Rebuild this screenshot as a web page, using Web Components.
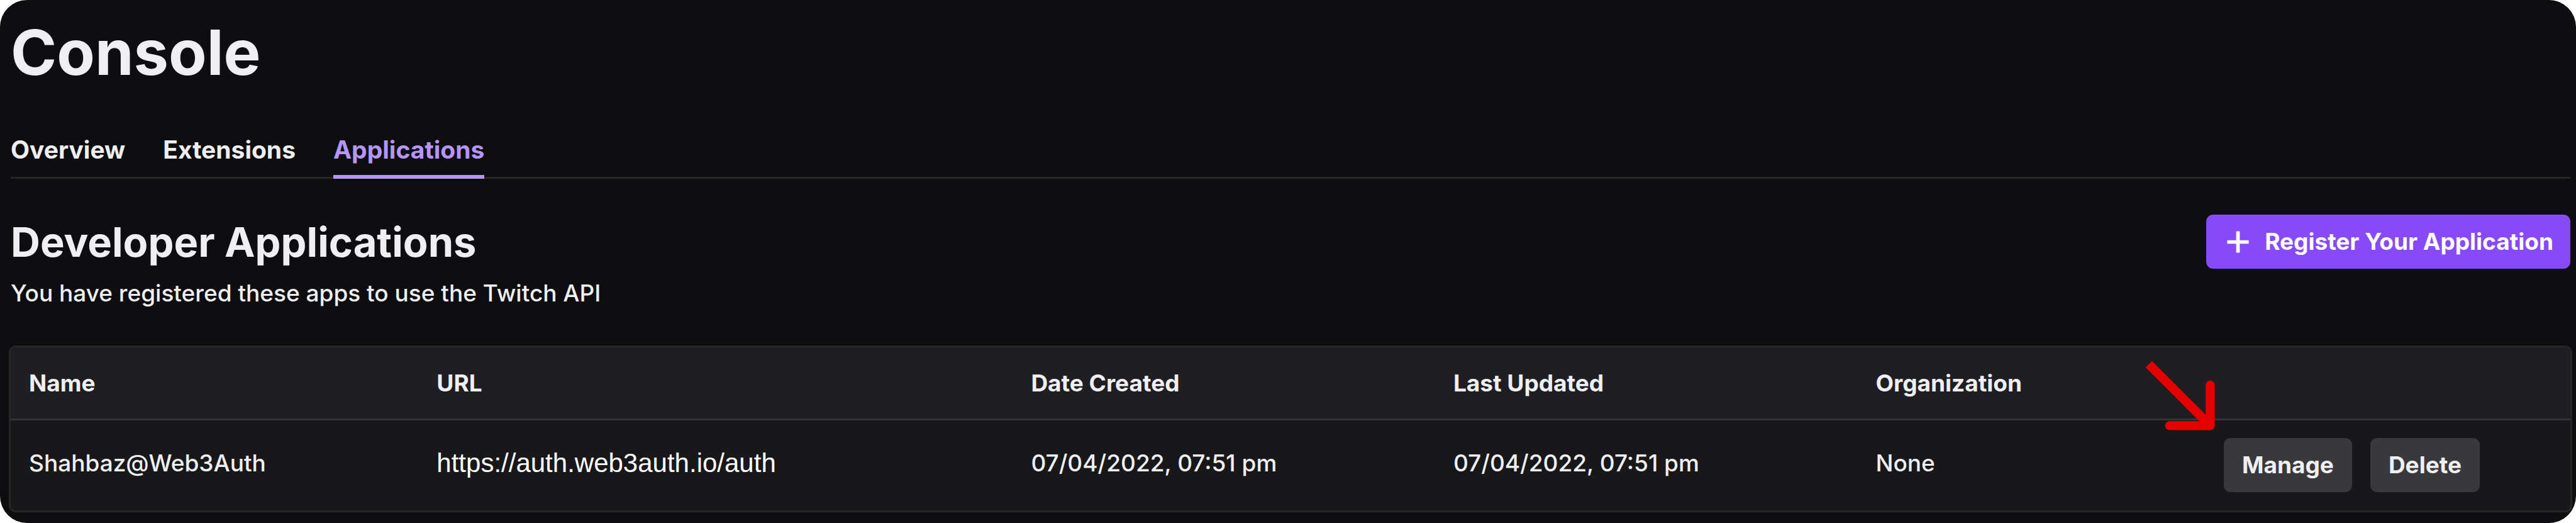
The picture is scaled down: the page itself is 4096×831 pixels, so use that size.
<!DOCTYPE html>
<html lang="en">
<head>
<meta charset="utf-8">
<meta name="viewport" content="width=device-width, initial-scale=1">
<title>Console - Applications</title>
<style>
  body {
    margin: 0;
    background: #ffffff;
    color: #efeff1;
    font: 500 37px/56px Inter, "Liberation Sans", sans-serif;
    --line: #262627;
    --accent: #b794f9;
    --radius: 11px;
  }
</style>
</head>
<body>
<console-page>
  <span slot="title">Console</span>
  <console-tabs slot="tabs">
    <console-tab href="#overview">Overview</console-tab>
    <console-tab href="#extensions">Extensions</console-tab>
    <console-tab href="#applications" current>Applications</console-tab>
  </console-tabs>
  <section-header>
    <span slot="heading">Developer Applications</span>
    <span slot="description">You have registered these apps to use the Twitch API</span>
    <ui-button slot="action" variant="primary" icon="plus">Register Your Application</ui-button>
  </section-header>
  <app-table></app-table>
</console-page>

<script>
class BaseElement extends HTMLElement {
  connectedCallback() {
    if (this.shadowRoot) return;
    this.attachShadow({ mode: 'open' }).innerHTML = this.render();
  }
}

customElements.define('console-page', class extends BaseElement {
  render() {
    return `
      <style>
        :host { display: block; box-sizing: border-box; min-height: 100vh; padding: 23px 9px 17px 17px;
                background: #0e0e10; border-radius: 43px; }
        h1 { margin: 0 0 65px; font-size: 99px; line-height: 120px; font-weight: 700; }
      </style>
      <h1><slot name="title"></slot></h1>
      <slot name="tabs"></slot>
      <main><slot></slot></main>`;
  }
});

customElements.define('console-tabs', class extends BaseElement {
  render() {
    return `
      <style>
        :host { display: block; }
        nav { display: flex; gap: 60px; box-shadow: inset 0 -3px var(--line); }
      </style>
      <nav aria-label="Console"><slot></slot></nav>`;
  }
});

customElements.define('console-tab', class extends BaseElement {
  render() {
    const current = this.hasAttribute('current') ? 'aria-current="page"' : '';
    return `
      <style>
        :host { display: block; }
        a { display: block; padding-bottom: 10px; border-bottom: 6px solid transparent; color: inherit;
            font-size: 39px; line-height: 60px; font-weight: 700; text-decoration: none; }
        a[aria-current] { color: var(--accent); border-color: var(--accent); }
      </style>
      <a href="${this.getAttribute('href')}" ${current}><slot></slot></a>`;
  }
});

customElements.define('section-header', class extends BaseElement {
  render() {
    return `
      <style>
        :host { display: flex; justify-content: space-between; align-items: flex-start; margin: 57px 0 55px; }
        .text { padding-top: 4px; }
        h2 { margin: 0 0 13px; font-size: 65px; line-height: 80px; font-weight: 700; }
        p { margin: 0; }
      </style>
      <div class="text">
        <h2><slot name="heading"></slot></h2>
        <p><slot name="description"></slot></p>
      </div>
      <slot name="action"></slot>`;
  }
});

customElements.define('ui-button', class extends BaseElement {
  render() {
    const icon = this.getAttribute('icon') === 'plus'
      ? '<svg viewBox="0 0 20 20" aria-hidden="true"><path d="M9 4h2v5h5v2h-5v5H9v-5H4V9h5z" fill="currentColor"/></svg>'
      : '';
    return `
      <style>
        :host { display: block; }
        button { display: flex; align-items: center; gap: 14px; height: 86px; padding: 0 29px; border: 0;
                 border-radius: var(--radius); background: #39393b; color: inherit;
                 font: inherit; font-weight: 700; line-height: 56px; white-space: nowrap; cursor: pointer; }
        :host([variant="primary"]) button { background: #864bf7; color: #ffffff; padding: 0 27px 0 22px; }
        svg { width: 57px; height: 57px; }
      </style>
      <button type="button">${icon}<span><slot></slot></span></button>`;
  }
});

customElements.define('pointer-arrow', class extends BaseElement {
  render() {
    return `
      <style>
        :host { display: block; width: 112px; height: 112px; pointer-events: none; }
        svg { display: block; width: 100%; height: 100%; }
      </style>
      <svg viewBox="0 0 156 156" fill="none" stroke="#e50000" stroke-width="20" aria-hidden="true">
        <path d="M8 8 144 144"/>
        <path d="M144 54V144H54" stroke-linecap="round" stroke-linejoin="round"/>
      </svg>`;
  }
});

customElements.define('app-table', class extends BaseElement {
  render() {
    return `
      <style>
        :host { display: block; margin: 0 -3px; border: 3px solid var(--line); border-radius: var(--radius);
                overflow: hidden; background: #18181a; }
        table { width: 100%; table-layout: fixed; border-collapse: separate; border-spacing: 0; }
        th, td { padding: 0 29px; text-align: left; font-weight: 500; }
        thead th { height: 113px; font-weight: 700; background: #1f1f23; border-bottom: 3px solid #343437; }
        tbody th, tbody td { height: 75px; padding-top: 40px; padding-bottom: 28px; vertical-align: top; }
        td a { color: #ffffff; font-family: "Liberation Sans", Arial, sans-serif; font-size: 42px; line-height: 56px;
               font-weight: 400; text-decoration: none; display: block; }
        tbody td.actions { position: relative; padding-top: 28px; }
        .buttons { display: flex; gap: 29px; }
        pointer-arrow { position: absolute; left: -96px; top: -95px; }
        col.name { width: 15.93%; } col.url { width: 23.22%; } col.date { width: 16.5%; } col.org { width: 13.6%; }
      </style>
      <table aria-label="Developer Applications">
        <colgroup><col class="name"><col class="url"><col class="date"><col class="date"><col class="org"><col></colgroup>
        <thead>
          <tr><th scope="col">Name</th><th scope="col">URL</th><th scope="col">Date Created</th>
              <th scope="col">Last Updated</th><th scope="col">Organization</th><th></th></tr>
        </thead>
        <tbody>
          <tr>
            <th scope="row">Shahbaz@Web3Auth</th>
            <td><a href="https://auth.web3auth.io/auth">https://auth.web3auth.io/auth</a></td>
            <td>07/04/2022, 07:51 pm</td>
            <td>07/04/2022, 07:51 pm</td>
            <td>None</td>
            <td class="actions">
              <div class="buttons"><ui-button>Manage</ui-button><ui-button>Delete</ui-button></div>
              <pointer-arrow></pointer-arrow>
            </td>
          </tr>
        </tbody>
      </table>`;
  }
});
</script>
</body>
</html>
